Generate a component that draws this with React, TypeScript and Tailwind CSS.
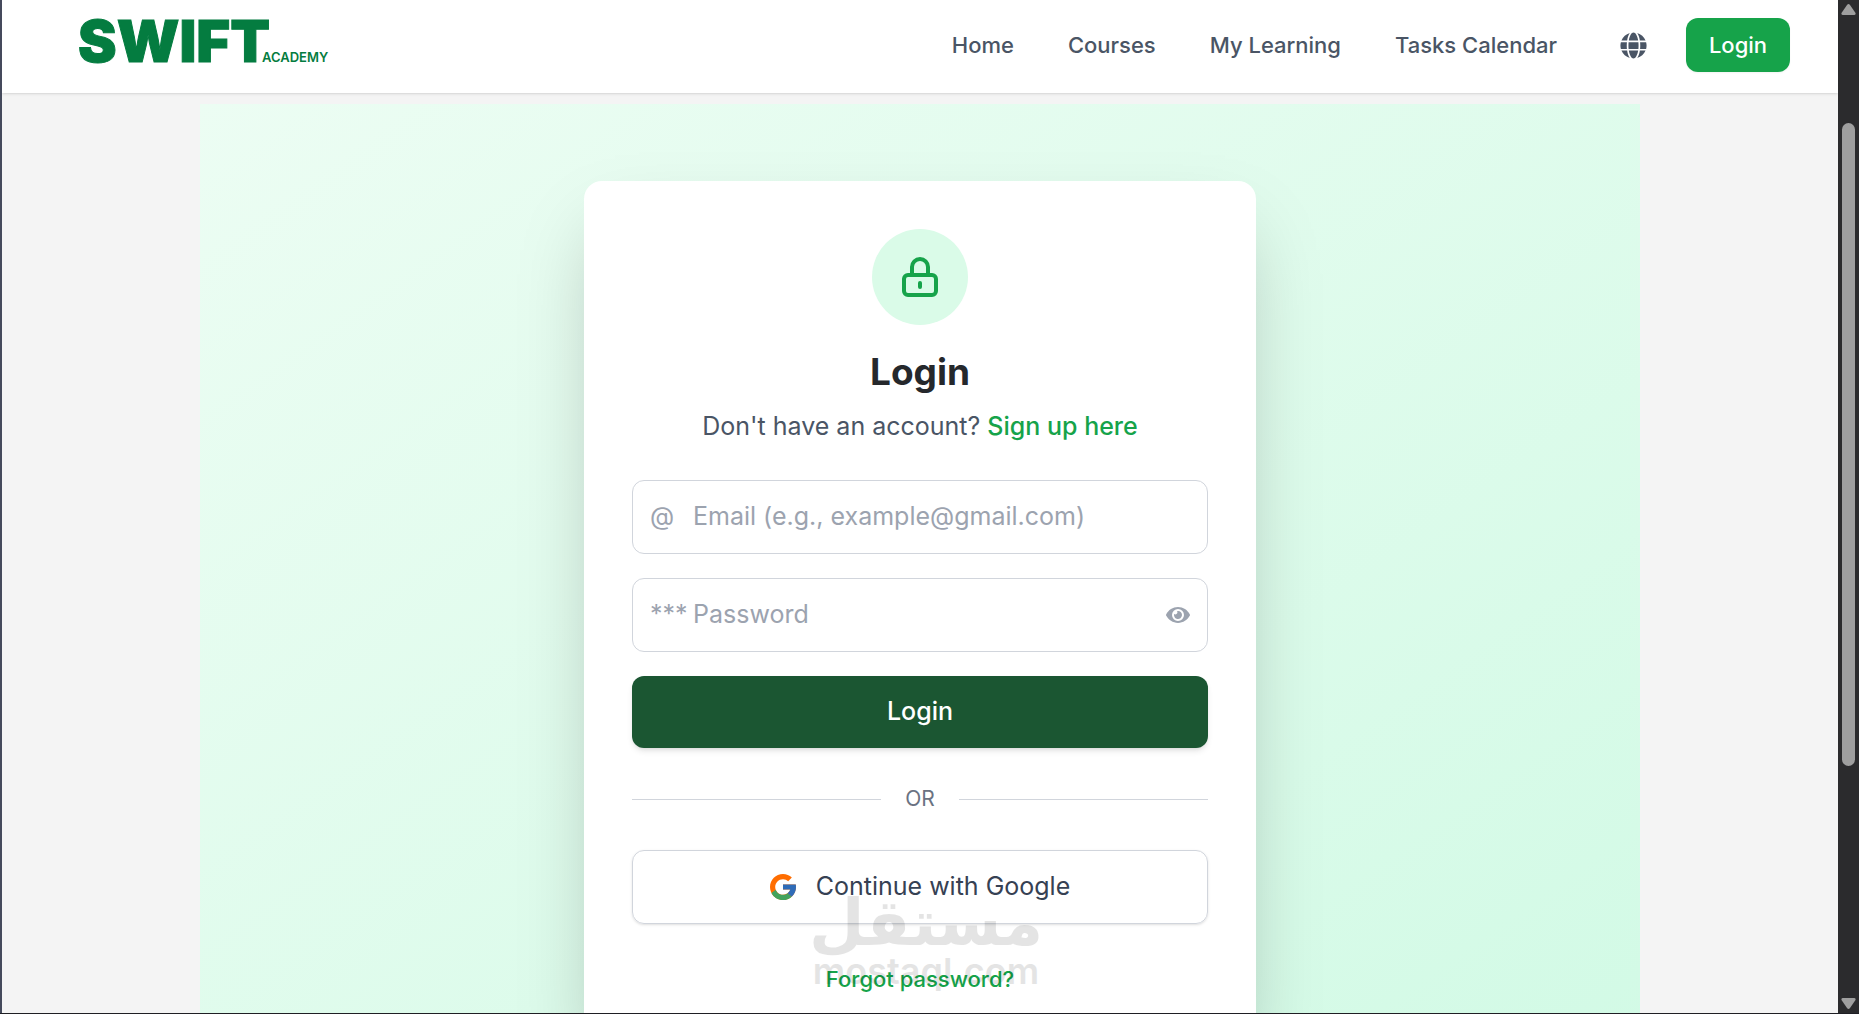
import React, { useState } from "react";
import { FaEye, FaGlobe } from "react-icons/fa";

const navLinks = ["Home", "Courses", "My Learning", "Tasks Calendar"];

const Logo: React.FC = () => (
  <a href="#" className="flex items-baseline text-[#047c40]">
    <span className="text-[58px] leading-[58px] font-black [-webkit-text-stroke:1px_#047c40]">SWIFT</span>
    <span className="-ml-2 text-[13px] font-semibold">ACADEMY</span>
  </a>
);

const Header: React.FC = () => (
  <header className="relative z-10 flex h-[93px] shrink-0 items-start justify-between bg-white pr-12 pl-[76px] shadow-sm">
    <div className="pt-3">
      <Logo />
    </div>
    <div className="flex items-center pt-[18px]">
      <nav className="flex items-center gap-[54px] text-[22px] font-medium text-gray-600">
        {navLinks.map((link) => (
          <a key={link} href="#">
            {link}
          </a>
        ))}
      </nav>
      <button type="button" aria-label="Change language" className="mr-[39px] ml-[63px] text-gray-600">
        <FaGlobe size={27} />
      </button>
      <button
        type="button"
        className="h-[54px] w-[104px] rounded-xl bg-[#16a34a] text-[22px] font-medium text-white shadow-xs"
      >
        Login
      </button>
    </div>
  </header>
);

const LockIcon: React.FC = () => (
  <svg
    className="size-12 text-[#16a34a]"
    viewBox="0 0 24 24"
    fill="none"
    stroke="currentColor"
    strokeWidth={2}
    strokeLinecap="round"
    strokeLinejoin="round"
  >
    <path d="M12 15v2m-6 4h12a2 2 0 002-2v-6a2 2 0 00-2-2H6a2 2 0 00-2 2v6a2 2 0 002 2zm10-10V7a4 4 0 00-8 0v4h8z" />
  </svg>
);

const GoogleIcon: React.FC = () => (
  <svg className="size-[26px]" viewBox="4 4 40 40">
    <path
      fill="#ff6d00"
      d="M43.611 20.083H42V20H24v8h11.303c-1.649 4.657-6.08 8-11.303 8-6.627 0-12-5.373-12-12s5.373-12 12-12c3.059 0 5.842 1.154 7.961 3.039l5.657-5.657C34.046 6.053 29.268 4 24 4 12.955 4 4 12.955 4 24s8.955 20 20 20 20-8.955 20-20c0-1.341-.138-2.65-.389-3.917z"
    />
    <path
      fill="#43a35c"
      d="M24 44c5.166 0 9.86-1.977 13.409-5.192l-6.19-5.238C29.211 35.091 26.715 36 24 36c-5.202 0-9.619-3.317-11.283-7.946l-6.522 5.025C9.505 39.556 16.227 44 24 44z"
    />
    <path
      fill="#2f6cb8"
      d="M43.611 20.083H42V20H24v8h11.303c-.792 2.237-2.231 4.166-4.087 5.571l6.193 5.238C36.971 39.205 44 34 44 24c0-1.341-.138-2.65-.389-3.917z"
    />
  </svg>
);

const LoginCard: React.FC = () => {
  const [showPassword, setShowPassword] = useState(false);

  return (
    <section className="flex w-full max-w-[672px] flex-col items-center rounded-[18px] bg-white p-12 shadow-[0_38px_75px_-18px_rgba(0,0,0,0.25)]">
      <div className="flex size-24 shrink-0 items-center justify-center rounded-full bg-[#dafbe8]">
        <LockIcon />
      </div>
      <h1 className="mt-[23px] text-[37px] leading-[48px] font-bold text-[#25282c]">Login</h1>
      <p className="mt-3 text-[25px] leading-9 text-gray-600">
        Don't have an account?{" "}
        <a href="#" className="font-medium text-[#16a34a]">
          Sign up here
        </a>
      </p>

      <form className="mt-9 flex w-full flex-col gap-6 text-[25px]" onSubmit={(e) => e.preventDefault()}>
        <div className="flex h-[74px] items-center rounded-xl border border-gray-300 px-[17px] text-[#9ca3af]">
          <label htmlFor="email" aria-label="Email" className="w-[43px] shrink-0">
            @
          </label>
          <input
            id="email"
            type="email"
            placeholder="Email (e.g., example@gmail.com)"
            className="min-w-0 flex-1 text-gray-700 outline-none placeholder:text-[#9ca3af]"
          />
        </div>
        <div className="flex h-[74px] items-center rounded-xl border border-gray-300 px-[17px] text-[#9ca3af]">
          <label htmlFor="password" aria-label="Password" className="w-[43px] shrink-0">
            ***
          </label>
          <input
            id="password"
            type={showPassword ? "text" : "password"}
            placeholder="Password"
            className="min-w-0 flex-1 text-gray-700 outline-none placeholder:text-[#9ca3af]"
          />
          <button type="button" aria-label="Show password" onClick={() => setShowPassword(!showPassword)}>
            <FaEye size={24} />
          </button>
        </div>
        <button type="submit" className="h-[72px] rounded-xl bg-[#1b5632] font-medium text-white shadow-md">
          Login
        </button>
      </form>

      <div className="my-9 flex w-full items-center gap-6 text-[21px] leading-[30px] text-gray-500">
        <hr className="h-0 flex-1 border-gray-300" />
        OR
        <hr className="h-0 flex-1 border-gray-300" />
      </div>

      <button
        type="button"
        className="flex h-[74px] w-full items-center justify-center gap-5 rounded-xl border border-gray-300 text-[25px] text-gray-700 shadow-sm"
      >
        <GoogleIcon />
        Continue with Google
      </button>
      <a href="#" className="mt-10 text-[22px] leading-[30px] font-medium text-[#16a34a]">
        Forgot password?
      </a>
    </section>
  );
};

// Stamp laid over the bottom centre of the page
const Watermark: React.FC = () => (
  <div
    aria-hidden="true"
    className="pointer-events-none absolute inset-x-0 bottom-6 z-20 flex flex-col items-center pl-3 text-black opacity-10"
  >
    <span lang="ar" className="font-['DejaVu_Sans'] text-[64px] leading-[60px] font-bold">
      مستقل
    </span>
    <span className="text-[36px] leading-9 font-semibold">mostaql.com</span>
  </div>
);

const Scrollbar: React.FC = () => (
  <div aria-hidden="true" className="flex w-[21px] shrink-0 flex-col items-center bg-[#2b2b2d] py-1">
    <svg className="h-[11px] w-[15px] shrink-0" viewBox="0 0 15 11" fill="#9f9f9f">
      <path d="M6 1Q7.500 -1 9 1L14.500 9Q15 11 13 11H2Q0 11 .5 9Z" />
    </svg>
    <div className="flex w-full flex-1 flex-col items-center pt-[108px]">
      <div className="w-[13px] grow-[643] rounded-full bg-[#9f9f9f]" />
      <div className="grow-[232]" />
    </div>
    <svg className="h-[11px] w-[15px] shrink-0" viewBox="0 0 15 11" fill="#9f9f9f">
      <path d="M6 10Q7.500 12 9 10L14.500 2Q15 0 13 0H2Q0 0 .5 2Z" />
    </svg>
  </div>
);

export default function App() {
  return (
    <div className="flex h-screen overflow-hidden border-b border-[#1f1f24] font-['Inter',sans-serif]">
      <div className="relative flex min-w-0 flex-1 flex-col overflow-hidden border-l-2 border-[#454a5c] bg-[#f4f4f4]">
        <Header />
        <main className="mx-auto mt-[11px] flex w-full max-w-[1440px] flex-col items-center bg-linear-to-br from-[#ecfdf3] to-[#d1fae5] pt-[77px] pb-[77px]">
          <LoginCard />
        </main>
        <Watermark />
      </div>
      <Scrollbar />
    </div>
  );
}
